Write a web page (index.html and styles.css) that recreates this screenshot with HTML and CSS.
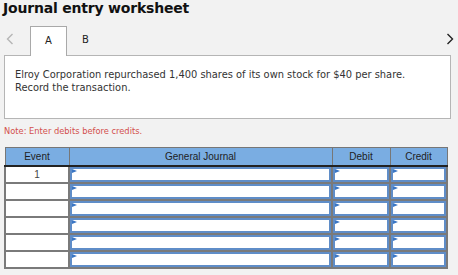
FILE: index.html
```html
<!DOCTYPE html>
<html>
<head>
<meta charset="utf-8">
<link rel="stylesheet" href="styles.css">
</head>
<body>
<h1 class="title">Journal entry worksheet</h1>
<div class="tabs">
  <span class="nav nav-prev"><svg width="8" height="12" viewBox="0 0 8 12"><path d="M6.5 1 L1.5 6 L6.5 11" fill="none" stroke="#b5b5b5" stroke-width="1.4"/></svg></span>
  <span class="tab tab-active">A</span>
  <span class="tab">B</span>
  <span class="spacer"></span>
  <span class="nav nav-next"><svg width="8" height="12" viewBox="0 0 8 12"><path d="M1.5 1 L6.5 6 L1.5 11" fill="none" stroke="#222" stroke-width="1.4"/></svg></span>
</div>
<div class="panel">
  <p class="question">Elroy Corporation repurchased 1,400 shares of its own stock for $40 per share.<br>Record the transaction.</p>
</div>
<p class="note">Note: Enter debits before credits.</p>
<table class="journal">
  <thead>
    <tr><th class="c-event">Event</th><th class="c-gj">General Journal</th><th class="c-debit">Debit</th><th class="c-credit">Credit</th></tr>
  </thead>
  <tbody>
    <tr><td class="event">1</td><td><div class="inp"></div></td><td><div class="inp"></div></td><td><div class="inp"></div></td></tr>
    <tr><td class="event"></td><td><div class="inp"></div></td><td><div class="inp"></div></td><td><div class="inp"></div></td></tr>
    <tr><td class="event"></td><td><div class="inp"></div></td><td><div class="inp"></div></td><td><div class="inp"></div></td></tr>
    <tr><td class="event"></td><td><div class="inp"></div></td><td><div class="inp"></div></td><td><div class="inp"></div></td></tr>
    <tr><td class="event"></td><td><div class="inp"></div></td><td><div class="inp"></div></td><td><div class="inp"></div></td></tr>
    <tr><td class="event"></td><td><div class="inp"></div></td><td><div class="inp"></div></td><td><div class="inp"></div></td></tr>
  </tbody>
</table>
</body>
</html>
```
FILE: styles.css
```css
html, body {
  margin: 0;
  padding: 0;
  background: #f2f2f2;
}
body {
  width: 458px;
  height: 275px;
  overflow: hidden;
  font-family: "DejaVu Sans", Verdana, sans-serif;
}
.title {
  margin: 0;
  padding-left: 3px;
  font-size: 14px;
  line-height: 16px;
  font-weight: bold;
  color: #111;
  letter-spacing: -0.2px;
}
.tabs {
  display: flex;
  align-items: stretch;
  height: 29px;
  margin-top: 10px;
  padding-left: 4px;
  position: relative;
  z-index: 1;
}
.nav {
  display: flex;
  align-items: center;
  padding-bottom: 4px;
}
.nav-prev {
  width: 26px;
  padding-left: 2px;
  box-sizing: border-box;
}
.nav-next {
  width: 12px;
}
.spacer { flex: 1; }
.tab {
  width: 37px;
  display: flex;
  justify-content: center;
  align-items: center;
  padding-bottom: 2px;
  font-size: 10px;
  color: #222;
  box-sizing: border-box;
}
.tab-active {
  background: #fff;
  border: 1px solid #a9a9a9;
  border-bottom: none;
  margin-bottom: -1px;
  height: 30px;
}
.panel {
  margin: 0 7px 0 4px;
  height: 64px;
  box-sizing: border-box;
  border: 1px solid #b5b5b5;
  background: #fff;
  padding: 12px 10px;
}
.question {
  margin: 0;
  font-size: 9.9px;
  line-height: 13px;
  color: #333;
}
.note {
  margin: 7px 0 0 4px;
  font-size: 8.3px;
  line-height: 11px;
  color: #d2504d;
}
.journal {
  margin: 10px 0 0 4px;
  width: 444px;
  border-collapse: collapse;
  table-layout: fixed;
  font-family: "Liberation Sans", Arial, sans-serif;
}
.journal th {
  background: #7aade2;
  height: 17px;
  font-size: 10px;
  font-weight: normal;
  color: #1e1e1e;
  border: 1px solid #777;
  border-left: 1px solid #222;
  border-bottom: 2px solid #222;
  padding: 0;
}
.journal th.c-event { border-left: 1px solid #777; }
.c-event { width: 63px; }
.c-debit { width: 57px; }
.c-credit { width: 56px; }
.journal td {
  height: 15px;
  padding: 0;
  border: 2px solid #7a7a7a;
  background: #fff;
}
.journal td.event {
  text-align: center;
  font-size: 10px;
  color: #444;
}
.inp {
  position: relative;
  height: 11px;
  border: 2px solid #5f8dc8;
  background: #fff;
}
.inp::before {
  content: "";
  position: absolute;
  left: 0;
  top: 0;
  border-left: 5px solid #3a76c4;
  border-top: 2px solid transparent;
  border-bottom: 2px solid transparent;
}
```
